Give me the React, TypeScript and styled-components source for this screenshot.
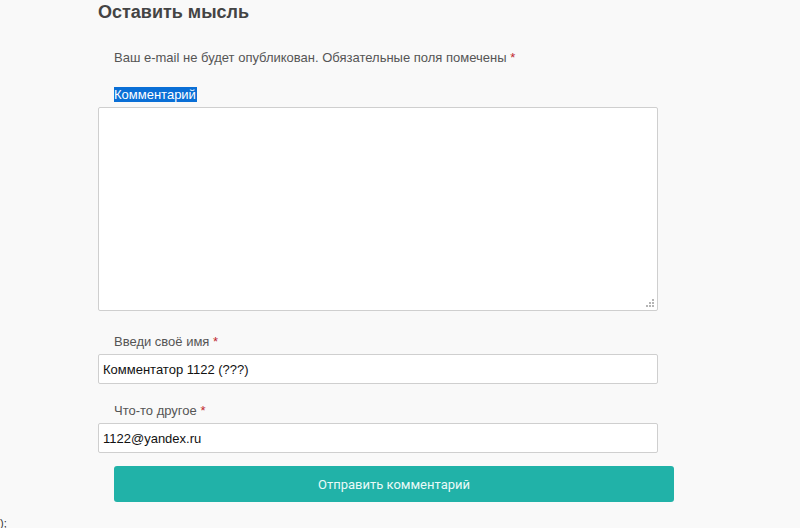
import React from 'react';
import styled, {createGlobalStyle} from "styled-components";

const GlobalStyle = createGlobalStyle`
    html, body {
        margin: 0;
        padding: 0;
        background: #f9f9f9;
        font-family: "Liberation Sans", Arial, sans-serif;
    }
`

// dotted corner grip like the old resize handle
const Grip = () => (
    <GripBox width="9" height="9" viewBox="0 0 9 9">
        {[[6, 0], [3, 3], [6, 3], [0, 6], [3, 6], [6, 6]].map(([x, y]) => (
            <rect key={`${x}-${y}`} x={x} y={y} width="2" height="2" fill="#b5b5b5"/>
        ))}
    </GripBox>
);

export default function App() {
    return (
        <>
            <GlobalStyle/>
            <Page>
                <Respond>
                    <Heading>Оставить мысль</Heading>
                    <Notes>Ваш e-mail не будет опубликован. Обязательные поля помечены <Required>*</Required></Notes>

                    <Field>
                        <Label><Selected>Комментарий</Selected></Label>
                        <AreaWrap>
                            <TextArea/>
                            <Grip/>
                        </AreaWrap>
                    </Field>

                    <Field $top={23}>
                        <Label>Введи своё имя <Required>*</Required></Label>
                        <Input defaultValue="Комментатор 1122 (???)"/>
                    </Field>

                    <Field $top={19}>
                        <Label>Что-то другое <Required>*</Required></Label>
                        <Input defaultValue="1122@yandex.ru"/>
                    </Field>

                    <Submit type="button">Отправить комментарий</Submit>
                </Respond>
                <Leftover>);</Leftover>
            </Page>
        </>
    );
}

const Page = styled.div`
    position: relative;
    width: 800px;
    height: 528px;
    overflow: hidden;
`

const Respond = styled.div`
    width: 560px;
    margin-left: 98px;
    padding-top: 1px;
`

const Heading = styled.h3`
    margin: 0;
    font-size: 18px;
    line-height: 22px;
    font-weight: bold;
    color: #444;
`

const Notes = styled.p`
    margin: 27px 0 0 16px;
    font-size: 13px;
    line-height: 16px;
    color: #555;
`

const Required = styled.span`
    color: #c0282d;
`

const Field = styled.div<{ $top?: number }>`
    margin-top: ${p => p.$top ?? 21}px;
    display: flex;
    flex-direction: column;
`

const Label = styled.label`
    padding-left: 16px;
    font-size: 13px;
    line-height: 16px;
    color: #555;
    margin-bottom: 4px;
`

const Selected = styled.span`
    background: #0a6fd6;
    color: #fff;
    padding: 0 1px 0 0;
`

const AreaWrap = styled.div`
    position: relative;
    width: 560px;
    height: 204px;
`

const TextArea = styled.textarea`
    display: block;
    box-sizing: border-box;
    width: 560px;
    height: 204px;
    margin: 0;
    border: 1px solid #cfcfcf;
    border-radius: 2px;
    background: #fff;
    resize: none;
    outline: none;
`

const GripBox = styled.svg`
    position: absolute;
    right: 3px;
    bottom: 3px;
`

const Input = styled.input`
    box-sizing: border-box;
    width: 560px;
    height: 30px;
    margin: 0;
    padding: 0 4px;
    border: 1px solid #cfcfcf;
    border-radius: 2px;
    background: #fff;
    font-family: "Liberation Sans", Arial, sans-serif;
    font-size: 13px;
    color: #111;
    outline: none;
`

const Submit = styled.button`
    display: block;
    box-sizing: border-box;
    width: 560px;
    height: 36px;
    margin: 13px 0 0 16px;
    border: none;
    border-radius: 3px;
    background: #21b2a8;
    color: #eafaf8;
    font-family: Roboto, "Liberation Sans", sans-serif;
    font-size: 13px;
    cursor: pointer;
`

const Leftover = styled.div`
    position: absolute;
    left: 0;
    bottom: -1px;
    font-size: 11px;
    line-height: 12px;
    color: #333;
`
